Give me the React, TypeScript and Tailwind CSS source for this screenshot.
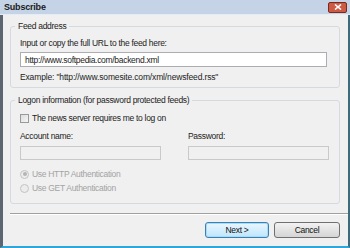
const font = "font-['Liberation_Sans','Arial',sans-serif]"

function Radio({ label, checked }: { label: string; checked?: boolean }) {
  return (
    <div className="flex items-center gap-[3px] text-[#a3a3a3]">
      <span className="w-[9px] h-[9px] rounded-full border border-[#c4c4c4] bg-[#ececec] flex items-center justify-center">
        {checked && <span className="w-[4px] h-[4px] rounded-full bg-[#b5b5b5]" />}
      </span>
      <span>{label}</span>
    </div>
  )
}

function CloseButton() {
  return (
    <div className="shrink-0 w-[19px] h-[11px] rounded-[2px] border border-[#7a2a1c] bg-[#cf5a43] flex items-center justify-center">
      <svg width="8" height="6" viewBox="0 0 8 6" className="block">
        <path d="M1 0.5 L7 5.5 M7 0.5 L1 5.5" stroke="#ffffff" strokeWidth="1.6" />
      </svg>
    </div>
  )
}

export default function App() {
  return (
    <div className={`w-[350px] h-[248px] flex flex-col bg-[#f0f0f0] text-[8.5px] tracking-[-0.3px] leading-[10px] text-[#222] ${font}`}>
      {/* title bar */}
      <div className="h-[15px] shrink-0 flex items-center justify-between pl-[4px] pr-[3px] bg-[#c4d4e6] border-b border-[#e4ecf5]">
        <span className="font-bold text-[9px] tracking-[-0.2px] text-[#1a1a1a]">Subscribe</span>
        <CloseButton />
      </div>

      <div className="flex-1 flex flex-col border-l-[3px] border-r-2 border-b-2 border-l-[#5b6670] border-r-[#3f6a7a] border-b-[#2ea6dc]">
        <div className="flex flex-col pl-[7px] pr-[8px]">
          {/* feed address */}
          <fieldset className="mt-[6px] border border-[#d5dadf] rounded-[3px] pl-[9px] pr-[12px] pb-[5px]">
            <legend className="px-[3px] ml-[-5px]">Feed address</legend>
            <div className="mt-[7px]">Input or copy the full URL to the feed here:</div>
            <div className="mt-[4px] h-[15px] bg-white border border-[#abadb3] flex items-center px-[4px]">
              http://www.softpedia.com/backend.xml
            </div>
            <div className="mt-[5px] tracking-[-0.15px]">Example: "http://www.somesite.com/xml/newsfeed.rss"</div>
          </fieldset>

          {/* logon information */}
          <fieldset className="mt-[7px] border border-[#d5dadf] rounded-[3px] pl-[9px] pr-[10px] pb-[10px]">
            <legend className="px-[3px] ml-[-5px]">Logon information (for password protected feeds)</legend>
            <div className="mt-[8px] flex items-center gap-[3px]">
              <span className="w-[9px] h-[9px] border border-[#9a9a9a] bg-gradient-to-br from-[#dcdcdc] to-[#f6f6f6]" />
              <span>The news server requires me to log on</span>
            </div>
            <div className="mt-[8px] grid grid-cols-2 gap-x-[27px]">
              <div>
                <div>Account name:</div>
                <div className="mt-[5px] h-[14px] border border-[#c9c9c9] bg-[#f0f0f0]" />
              </div>
              <div>
                <div>Password:</div>
                <div className="mt-[5px] h-[14px] border border-[#c9c9c9] bg-[#f0f0f0]" />
              </div>
            </div>
            <div className="mt-[9px] flex flex-col gap-[4px]">
              <Radio label="Use HTTP Authentication" checked />
              <Radio label="Use GET Authentication" />
            </div>
          </fieldset>
        </div>

        {/* separator + buttons */}
        <div className="ml-[7px] mt-[9px] border-t border-t-[#a0a0a0] border-b border-b-white" />
        <div className="flex justify-end gap-[5px] pr-[8px] pt-[7px]">
          <button className="w-[64px] h-[16px] rounded-[3px] border border-[#3c7fb1] bg-gradient-to-b from-[#eaf6fd] to-[#bee6fd] text-[#111] shadow-[inset_0_0_0_1px_#a6dcf9]">
            Next &gt;
          </button>
          <button className="w-[66px] h-[16px] rounded-[3px] border border-[#707070] bg-gradient-to-b from-[#f2f2f2] to-[#d5d5d5] text-[#111]">
            Cancel
          </button>
        </div>
      </div>
    </div>
  )
}
